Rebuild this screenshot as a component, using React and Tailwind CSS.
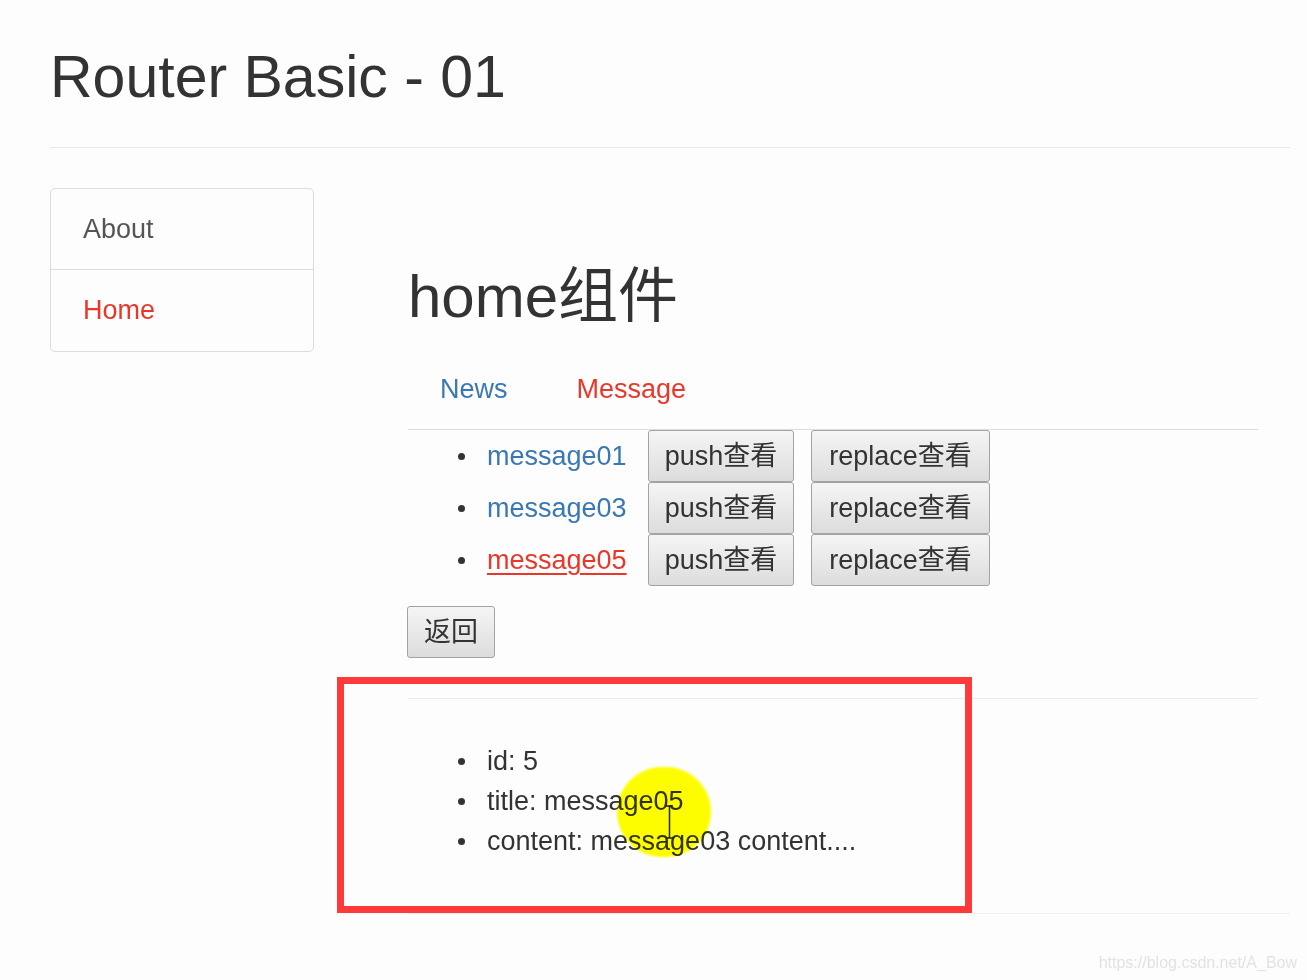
const font = "font-['Liberation_Sans','Noto_Sans_CJK_SC',sans-serif]";

const btn =
  "flex items-center justify-center border border-[#a3a3a3] rounded-[3px] bg-linear-to-b from-[#f5f5f5] to-[#dcdcdc] text-[#333] text-[27px]";

const messages = [
  { name: "message01", active: false },
  { name: "message03", active: false },
  { name: "message05", active: true },
];

const Bullet = () => <span className="block ml-[50px] w-[7px] h-[7px] rounded-full bg-[#333] shrink-0" />;

const App = () => {
  return (
    <div className={`relative min-h-screen bg-[#fdfdfd] text-[#333] ${font}`}>
      <div className="pl-[50px] pr-[17px] pt-[44px]">
        <h1 className="text-[59px] leading-[66px] pb-[37px] border-b border-[#e8e8e8]">Router Basic - 01</h1>

        <div className="flex mt-[40px]">
          {/* side nav */}
          <div className="w-[264px] self-start border border-[#dcdcdc] rounded-[5px] text-[27px]">
            <div className="h-[81px] flex items-center pl-[32px] text-[#555] border-b border-[#dcdcdc]">About</div>
            <div className="h-[81px] flex items-center pl-[32px] text-[#e8372b]">Home</div>
          </div>

          {/* content */}
          <div className="ml-[94px] w-[850px]">
            <h2 className="mt-[74px] text-[60px] leading-[70px] text-[#333]">home组件</h2>

            <div className="mt-[17px] flex gap-[5px] border-b border-[#dddddd] text-[27px]">
              <span className="h-[80px] flex items-center px-[32px] text-[#3a78b5]">News</span>
              <span className="h-[80px] flex items-center px-[32px] text-[#e8372b]">Message</span>
            </div>

            <div>
              {messages.map((m) => (
                <div key={m.name} className="h-[52px] flex items-center">
                  <Bullet />
                  <span
                    className={
                      m.active
                        ? "ml-[22px] w-[161px] text-[27px] text-[#e8372b] underline underline-offset-[4px] decoration-[2px]"
                        : "ml-[22px] w-[161px] text-[27px] text-[#3a78b5]"
                    }
                  >
                    {m.name}
                  </span>
                  <button className={`${btn} h-full w-[146px]`}>push查看</button>
                  <button className={`${btn} h-full w-[179px] ml-[17px]`}>replace查看</button>
                </div>
              ))}
            </div>

            <button className={`${btn} w-[88px] h-[52px] mt-[20px] ml-[-1px]`}>返回</button>

            <div className="mt-[40px] border-t border-[#ececec]" />

            <div className="mt-[42px] text-[27px] leading-[40px] text-[#333]">
              <div className="flex items-center">
                <Bullet />
                <span className="ml-[22px]">id: 5</span>
              </div>
              <div className="flex items-center">
                <Bullet />
                <span className="ml-[22px]">title: message05</span>
              </div>
              <div className="flex items-center">
                <Bullet />
                <span className="ml-[22px]">content: message03 content....</span>
              </div>
            </div>

            <div className="mt-[52px] w-[882px] border-t border-[#f0f0f0]" />
          </div>
        </div>
      </div>

      {/* cursor highlight */}
      <div className="absolute left-[617px] top-[767px] w-[94px] h-[90px] rounded-full bg-[#ffff00] mix-blend-multiply blur-[1px]" />
      <svg className="absolute left-[665px] top-[805px]" width="9" height="34" viewBox="0 0 9 34">
        <path d="M1 1h7M4.5 1v32M1 33h7" stroke="#222" strokeWidth="1.5" fill="none" />
      </svg>

      {/* annotation box */}
      <div className="absolute left-[337px] top-[677px] w-[635px] h-[236px] border-[7px] border-[#fe3a3a]" />

      <div className="absolute right-[10px] top-[951px] text-[16px] text-[#e2e2e2]">https://blog.csdn.net/A_Bow</div>
    </div>
  );
};

export default App;
